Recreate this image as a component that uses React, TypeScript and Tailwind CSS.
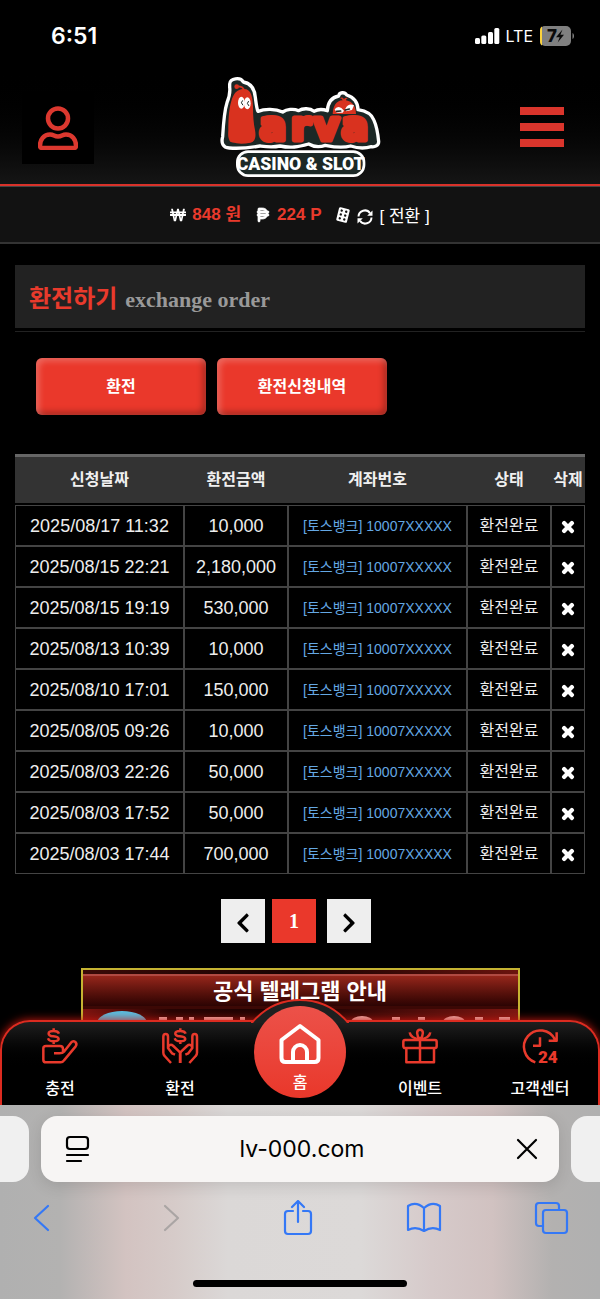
import type { ReactNode } from "react";
import { FaChevronLeft, FaChevronRight, FaTimes, FaWonSign } from "react-icons/fa";
import { FaPesoSign } from "react-icons/fa6";

type Exchange = {
  date: string;
  amount: string;
};

const exchanges: Exchange[] = [
  { date: "2025/08/17 11:32", amount: "10,000" },
  { date: "2025/08/15 22:21", amount: "2,180,000" },
  { date: "2025/08/15 19:19", amount: "530,000" },
  { date: "2025/08/13 10:39", amount: "10,000" },
  { date: "2025/08/10 17:01", amount: "150,000" },
  { date: "2025/08/05 09:26", amount: "10,000" },
  { date: "2025/08/03 22:26", amount: "50,000" },
  { date: "2025/08/03 17:52", amount: "50,000" },
  { date: "2025/08/03 17:44", amount: "700,000" },
];

function StatusBar() {
  return (
    <div className="flex h-[72px] items-center justify-between pr-6 pl-[51px] font-['Inter',sans-serif] text-white">
      <span className="text-[23px] leading-6 font-semibold">6:51</span>
      <div className="flex items-center gap-1">
        <svg width="28" height="18" viewBox="0 0 28 18" fill="#fff" aria-hidden="true">
          <rect x="1" y="11" width="5" height="6" rx="1.5" />
          <rect x="7.300" y="8.500" width="5" height="8.500" rx="1.500" />
          <rect x="14" y="5" width="5" height="12" rx="1.500" />
          <rect x="20.300" y="1" width="5" height="16" rx="1.500" />
        </svg>
        <span className="text-base leading-5">LTE</span>
        <svg width="37" height="20" viewBox="0 0 37 20" className="ml-0.5" aria-hidden="true">
          <rect x="1" width="31" height="20" rx="5" fill="#808080" />
          <path d="M3 .5v19C1.500 19 1 17 1 15V5C1 3 1.500 1 3 .5Z" fill="#fcd33c" />
          <path d="M33.500 7c2 .8 2 5.200 0 6Z" fill="#808080" />
          <text x="8" y="16" fontSize="17" fontWeight="800" fill="#0a0a0a">
            7
          </text>
          <path d="M23.500 3.500 17 11.300h3.700L18.700 16.500 25 8.700h-3.600Z" fill="#0a0a0a" />
        </svg>
      </div>
    </div>
  );
}

function Logo() {
  return (
    <svg
      width="162"
      height="104"
      viewBox="57 18 486 312"
      strokeLinejoin="round"
      strokeLinecap="round"
      role="img"
      aria-label="Larva Casino & Slot"
    >
      {/* outline plates */}
      <rect x="112" y="245" width="380" height="72" rx="32" fill="#1c2826" stroke="#fff" strokeWidth="8" />
      <path
        d="M89 43C88 24 122 20 130 36c22 4 34 20 36 46 3 22 4 34 8 42 20-8 52-8 74 2 12-8 32-11 48-4 12-8 34-8 46 2 14-8 28-6 40-2 2-26 12-40 34-44 2-12 18-13 24-3 22 6 34 24 34 44 26 4 42 14 48 32 10 22 12 44 14 64 0 12-12 17-22 15-20 6-44 4-62-2-30 8-56 2-76-2-22 8-38 3-50-4-32 9-54 13-86 6-24 5-44 2-60 0-34 6-64 8-92 6-20-1-25-16-20-34 2-34 4-74 13-102 8-20 10-32 8-46Z"
        fill="#1c2826"
        stroke="#fff"
        strokeWidth="10"
      />
      {/* big worm */}
      <path
        d="M132 57c22 0 26 24 27 55 0 26 2 50 6 68 4 22 0 36-14 38-20 4-38 4-54-1-14-5-13-22-12-36 0-36 2-64 9-88 6-22 18-37 38-36Z"
        fill="#d9321f"
      />
      <path d="M132 60c-2-9-10-11-20-11" fill="none" stroke="#d9321f" strokeWidth="5" />
      <circle cx="110" cy="50" r="7" fill="#d9321f" />
      <ellipse cx="124" cy="98" rx="10" ry="18" fill="#fff" />
      <ellipse cx="142" cy="100" rx="10" ry="18" fill="#fff" />
      <path d="M127 92q-7 6 1 13M145 94q-7 6 1 13" fill="none" stroke="#1c2826" strokeWidth="3" />
      {/* small worm */}
      <path
        d="M398 138c0-30 10-46 30-47-2-5-6-6-9-5 4-6 10-4 13 1 4-5 8-5 12-2-4 1-6 3-6 6 20 4 30 18 30 42Z"
        fill="#d9321f"
      />
      <path d="M404 118q14-16 28 4l-4 6h-18ZM436 116q10-18 26-10l-6 14-18 4Z" fill="#fff" />
      <path d="m410 124 12-1m14-3 12-3" stroke="#1c2826" strokeWidth="5" />
      <path d="M390 138h80" stroke="#1c2826" strokeWidth="12" />
      <g fontFamily="DejaVu Sans, sans-serif" fontWeight="700" fill="#d9321f" stroke="#d9321f">
        <text x="84" y="211" fontSize="112" strokeWidth="13">
          L
        </text>
        <text x="178 272 340 424" y="209" fontSize="120" strokeWidth="15">
          arva
        </text>
      </g>
      <text
        x="302"
        y="300"
        fontFamily="Roboto, sans-serif"
        fontWeight="900"
        fontSize="53"
        textAnchor="middle"
        fill="#fff"
      >
        CASINO &amp; SLOT
      </text>
    </svg>
  );
}

function Header() {
  return (
    <header className="bg-linear-to-b from-black from-35% to-[#151515]">
      <StatusBar />
      <div className="flex h-28 items-start justify-between px-[22px]">
        <button
          type="button"
          aria-label="내 정보"
          className="mt-5 flex size-[72px] items-center justify-center bg-black"
        >
          <svg width="40" height="44" viewBox="0 0 40 44" fill="none" stroke="#dc382f" strokeWidth="4.500" aria-hidden="true">
            <circle cx="20" cy="12.500" r="10" />
            <path
              d="M12 28.500c4 0 4 2 8 2s4-2 8-2c6 0 10 5 10 11 0 1.500-1 2.500-2.500 2.500h-31C3 42 2 41 2 39.500c0-6 4-11 10-11Z"
              strokeLinejoin="round"
            />
          </svg>
        </button>
        <a href="#" className="mt-1">
          <Logo />
        </a>
        <button
          type="button"
          aria-label="메뉴"
          className="mt-[19px] flex size-[72px] flex-col items-center justify-center gap-2"
        >
          <span className="h-2 w-11 bg-[#da352c]" />
          <span className="h-2 w-11 bg-[#da352c]" />
          <span className="h-2 w-11 bg-[#da352c]" />
        </button>
      </div>
    </header>
  );
}

function Balance() {
  return (
    <div className="border-t-2 border-[#d9322a]">
      <div className="flex h-[58px] items-center justify-center border-t border-b-2 border-t-[#444] border-b-[#333] bg-[#121212] text-[17px] leading-6 text-white">
        <FaWonSign className="mr-1.5 size-4" />
        <strong className="mr-3.5 text-[#e93a2c]">848 원</strong>
        <FaPesoSign className="mr-1.5 size-4 stroke-white stroke-[24px]" />
        <strong className="mr-3.5 text-[#e93a2c]">224 P</strong>
        <svg width="16" height="16" viewBox="0 0 16 16" className="mr-1.5" aria-hidden="true">
          <g transform="rotate(14 8 8)">
            <rect x="2.500" y="1" width="11" height="14" rx="1.500" fill="#fff" />
            <g fill="#121212">
              <circle cx="5.700" cy="4" r="1.200" />
              <circle cx="10.300" cy="4" r="1.200" />
              <circle cx="5.700" cy="8" r="1.200" />
              <circle cx="10.300" cy="8" r="1.200" />
              <circle cx="5.700" cy="12" r="1.200" />
              <circle cx="10.300" cy="12" r="1.200" />
            </g>
          </g>
        </svg>
        <button type="button" className="flex items-center gap-1.5 pt-1 text-[17px] leading-6">
          <svg width="16" height="16" viewBox="0 0 16 16" fill="none" stroke="#fff" strokeWidth="2" aria-hidden="true">
            <path d="M1.500 7.500A6.300 6.300 0 0 1 13 4.200M14.500 8.500A6.300 6.300 0 0 1 3 11.800" />
            <path d="M15.500 1.500v5.300h-5.300ZM.5 14.500V9.200h5.300Z" fill="#fff" stroke="none" />
          </svg>
          [ 전환 ]
        </button>
      </div>
    </div>
  );
}

function TabButton({ children }: { children: ReactNode }) {
  return (
    <button
      type="button"
      className="h-[57px] w-[170px] rounded-md bg-[#ea382b] text-base font-bold text-white shadow-[inset_3px_3px_6px_rgba(255,255,255,0.25),inset_-3px_-3px_6px_rgba(0,0,0,0.3)]"
    >
      {children}
    </button>
  );
}

function ExchangeTable() {
  return (
    <table className="mt-[39px] w-full table-fixed border-separate border-spacing-0 text-center">
      <colgroup>
        <col className="w-[169px]" />
        <col className="w-[104px]" />
        <col />
        <col className="w-[84px]" />
        <col className="w-[34px]" />
      </colgroup>
      <thead>
        <tr className="h-[51px] text-base leading-6 whitespace-nowrap text-[#f0f0f0] [&>th]:border-t-[3px] [&>th]:border-b-2 [&>th]:border-t-[#666] [&>th]:border-b-black [&>th]:bg-[#333] [&>th]:p-0">
          <th>신청날짜</th>
          <th>환전금액</th>
          <th>계좌번호</th>
          <th>상태</th>
          <th>삭제</th>
        </tr>
      </thead>
      <tbody>
        {exchanges.map((exchange) => (
          <tr
            key={exchange.date}
            className="h-[41px] text-[18px] leading-6 text-[#eee] [&>td]:border [&>td]:border-[#444] [&>td]:p-0"
          >
            <td>{exchange.date}</td>
            <td>{exchange.amount}</td>
            <td className="text-sm text-[#64a8e4]">[토스뱅크] 10007XXXXX</td>
            <td className="text-base">환전완료</td>
            <td>
              <button type="button" aria-label="삭제" className="block w-full pt-0.5">
                <FaTimes className="mx-auto size-4 stroke-white stroke-[40px] text-white" />
              </button>
            </td>
          </tr>
        ))}
      </tbody>
    </table>
  );
}

function Pagination() {
  return (
    <nav aria-label="페이지" className="mt-[25px] flex justify-center pr-2">
      <button
        type="button"
        aria-label="이전"
        className="mr-[7px] flex size-11 items-center justify-center bg-[#eee] pt-1 text-black"
      >
        <FaChevronLeft className="size-[22px]" />
      </button>
      <button
        type="button"
        aria-current="page"
        className="mr-[11px] size-11 bg-[#ea382b] font-['Liberation_Serif',serif] text-xl font-bold text-white"
      >
        1
      </button>
      <button
        type="button"
        aria-label="다음"
        className="flex size-11 items-center justify-center bg-[#eee] pt-1 text-black"
      >
        <FaChevronRight className="size-[22px]" />
      </button>
    </nav>
  );
}

function TelegramBanner() {
  return (
    <a
      href="#"
      className="mx-auto mt-[25px] block h-[52px] w-[439px] overflow-hidden border-2 border-b-0 border-[#c5b332] bg-[#3c0805]"
    >
      <div className="h-1 bg-linear-to-r from-[#3a0a07] via-[#180302] to-[#6b130e]" />
      <div className="h-8 border-t-2 border-[#b04a42] bg-linear-to-b from-[#96261b] to-[#2c0403] text-center text-[22px] leading-8 font-bold text-white">
        공식 텔레그램 안내
      </div>
      <svg width="435" height="14" viewBox="0 0 435 14" aria-hidden="true">
        <defs>
          <linearGradient id="strip">
            <stop offset="0" stopColor="#7c1410" />
            <stop offset=".2" stopColor="#260403" />
            <stop offset=".5" stopColor="#1a0202" />
            <stop offset="1" stopColor="#7c1712" />
          </linearGradient>
        </defs>
        <path d="M0 3h435v11H0Z" fill="url(#strip)" />
        <ellipse cx="39" cy="17" rx="25" ry="12" fill="#57bfe3" />
        <g fill="#e6b5b2">
          <path d="M76 11h8v3h-8ZM93 11h7v3h-7ZM106 11h5v3h-5ZM121 11h29v3h-29ZM157 11h5v3h-5ZM309 11h8v3h-8ZM335 11h7v3h-7ZM392 11h8v3h-8ZM416 11h11v3h-11Z" />
          <ellipse cx="279" cy="16" rx="11" ry="6" />
          <ellipse cx="371" cy="16" rx="11" ry="6" />
        </g>
      </svg>
    </a>
  );
}

function NavIcon({ children }: { children: ReactNode }) {
  return (
    <svg
      width="36"
      height="36"
      viewBox="0 0 108 108"
      fill="none"
      stroke="#e93a2c"
      strokeWidth="7.500"
      strokeLinejoin="round"
      className="overflow-visible"
      aria-hidden="true"
    >
      {children}
    </svg>
  );
}

function Dollar() {
  return <path d="M51 17q-3-8-16-8c-20 0-20 14-1 16 21 2 21 15 1 15-13 0-15-4-17-9M35 1v8M35 40v8" />;
}

function NavItem({ label, icon }: { label: string; icon: ReactNode }) {
  return (
    <a href="#" className="flex flex-col items-center pt-1.5 text-base leading-6 font-medium text-white">
      {icon}
      <span className="mt-[13px]">{label}</span>
    </a>
  );
}

function PalmIcon() {
  return (
    <path d="M27 105 8 84q-4-4-4-10V26q0-8 7-8t7 8v34l12 16 9 4M18 60l2-6q6-7 14 0l17 16q4 4 4 9v26" />
  );
}

function BottomNav() {
  return (
    <nav className="relative h-[85px] rounded-t-[30px] border-2 border-b-0 border-[#dc2b20] bg-linear-to-b from-[#1f1f1f] to-black to-60% shadow-[0_0_10px_#d01a10]">
      {/* raised arc behind the home button */}
      <div className="absolute -top-[23px] left-1/2 h-6 w-[98px] -translate-x-1/2 overflow-hidden">
        <div className="-ml-[14px] size-[126px] rounded-full border-2 border-[#dc2b20] bg-[#1f1f1f]" />
      </div>
      <div className="relative -mx-0.5 grid grid-cols-5">
        <NavItem
          label="충전"
          icon={
            <NavIcon>
              <Dollar />
              <path d="M36 76h16q10 0 15-6l20-26q6-7 13-2 6 6 1 13L66 97q-4 6-10 6H12q-8 0-8-8V61q0-7 8-7h42q9 0 9 9v8" />
            </NavIcon>
          }
        />
        <NavItem
          label="환전"
          icon={
            <NavIcon>
              <g transform="translate(20 0)">
                <Dollar />
              </g>
              <PalmIcon />
              <g transform="matrix(-1 0 0 1 109 0)">
                <PalmIcon />
              </g>
            </NavIcon>
          }
        />
        <div className="relative">
          <a
            href="#"
            className="absolute -top-4 left-1/2 flex size-[92px] -translate-x-1/2 flex-col items-center rounded-full bg-linear-to-b from-[#ec5149] to-[#e9372a] pt-[17px] text-base leading-6 font-medium text-white"
          >
            <svg width="42" height="44" viewBox="0 0 42 44" fill="none" stroke="#fff" strokeWidth="4" strokeLinejoin="round" aria-hidden="true">
              <path d="M2.500 17 21 3l18.500 14v18q0 4-4 4h-29q-4 0-4-4ZM14 39V29a7 7 0 0 1 14 0v10" />
            </svg>
            <span className="mt-1">홈</span>
          </a>
        </div>
        <NavItem
          label="이벤트"
          icon={
            <NavIcon>
              <rect x="4" y="36" width="100" height="24" rx="5" />
              <path d="M13 60v43h83V60M54 36v67M54 34C38 32 25 25 23 13M54 34c16-2 29-9 31-21M54 34C42 22 43 5 54 5s12 17 0 29Z" />
            </NavIcon>
          }
        />
        <NavItem
          label="고객센터"
          icon={
            <NavIcon>
              <path d="M40 103A49 49 0 1 1 99 35M104 13v25H80M54 28v25H33" />
              <text
                x="48"
                y="104"
                fontSize="51"
                fontWeight="900"
                fontFamily="Roboto, sans-serif"
                fill="#e93a2c"
                stroke="none"
              >
                24
              </text>
            </NavIcon>
          }
        />
      </div>
    </nav>
  );
}

function ToolButton({ label, children }: { label: string; children: ReactNode }) {
  return (
    <button type="button" aria-label={label} className="flex size-9 items-center justify-center">
      <svg
        width="36"
        height="36"
        viewBox="0 0 36 36"
        fill="none"
        stroke="currentColor"
        strokeWidth="2.200"
        strokeLinecap="round"
        strokeLinejoin="round"
        aria-hidden="true"
      >
        {children}
      </svg>
    </button>
  );
}

function BrowserBar() {
  return (
    <footer className="relative h-[194px] bg-[linear-gradient(90deg,#b0b0b0_0%,#b3b2b1_10%,#d3c3c1_21%,#d6cbc9_29%,#dbd8d7_38%,#dcd9d8_60%,#d6caca_72%,#d1c2c1_82%,#b3b1b0_92%,#b0b0b0_100%)] pt-[11px] font-['Inter',sans-serif]">
      <div className="flex h-[66px] gap-3">
        <div className="w-[29px] rounded-r-2xl bg-[#f0f0f0]" />
        <div className="flex flex-1 items-center justify-between rounded-2xl bg-[#f7f5f4] pr-3.5 pl-[18px] text-black shadow-[0_4px_16px_rgba(0,0,0,0.12)]">
          <ToolButton label="페이지 메뉴">
            <rect x="8" y="6" width="21" height="12" rx="3" />
            <path d="M8 24h21M8 30h14" />
          </ToolButton>
          <span className="text-[23px] leading-8">lv-000.com</span>
          <ToolButton label="중지">
            <path d="m9 9 18 18M27 9 9 27" />
          </ToolButton>
        </div>
        <div className="w-[29px] rounded-l-2xl bg-[#f0f0f0]" />
      </div>
      <div className="mt-[18px] flex justify-between pr-[31px] pl-6 text-[#3478f6]">
        <ToolButton label="뒤로">
          <path d="M24 6 11 18l13 12" />
        </ToolButton>
        <div className="text-[#aaa5a4]">
          <ToolButton label="앞으로">
            <path d="m14 6 13 12-13 12" />
          </ToolButton>
        </div>
        <ToolButton label="공유">
          <path d="M14 11H9q-3 0-3 3v17q0 3 3 3h20q3 0 3-3V14q0-3-3-3h-5M19 22V2M13 7l6-6 6 6" />
        </ToolButton>
        <ToolButton label="책갈피">
          <path d="M18 8Q10 1 2 6v24q8-4 16 1 8-5 16-1V6q-8-5-16 2Zm0 0v23" />
        </ToolButton>
        <ToolButton label="탭">
          <rect x="10" y="10" width="24" height="23" rx="3" />
          <path d="M10 26H6q-3 0-3-3V6q0-3 3-3h17q3 0 3 3v4" />
        </ToolButton>
      </div>
      <div className="mx-auto mt-11 h-[7px] w-[214px] rounded-full bg-black" />
    </footer>
  );
}

export default function App() {
  return (
    <div className="min-h-screen bg-black font-['Liberation_Sans','Noto_Sans_CJK_KR',sans-serif]">
      <Header />
      <Balance />
      <main className="overflow-hidden px-[15px] pt-[21px]">
        <div className="border-b border-[#222] pb-[3px]">
          <h1 className="flex h-[63px] items-baseline gap-2 bg-[#222] px-3.5 pt-[18px] text-2xl leading-8 font-bold text-[#e93a2c]">
            환전하기
            <small className="font-['Liberation_Serif',serif] text-[22px] text-[#999]">
              exchange order
            </small>
          </h1>
        </div>
        <div className="mt-[26px] flex gap-[11px] pl-[21px]">
          <TabButton>환전</TabButton>
          <TabButton>환전신청내역</TabButton>
        </div>
        <ExchangeTable />
        <Pagination />
        <TelegramBanner />
      </main>
      <BottomNav />
      <BrowserBar />
    </div>
  );
}
